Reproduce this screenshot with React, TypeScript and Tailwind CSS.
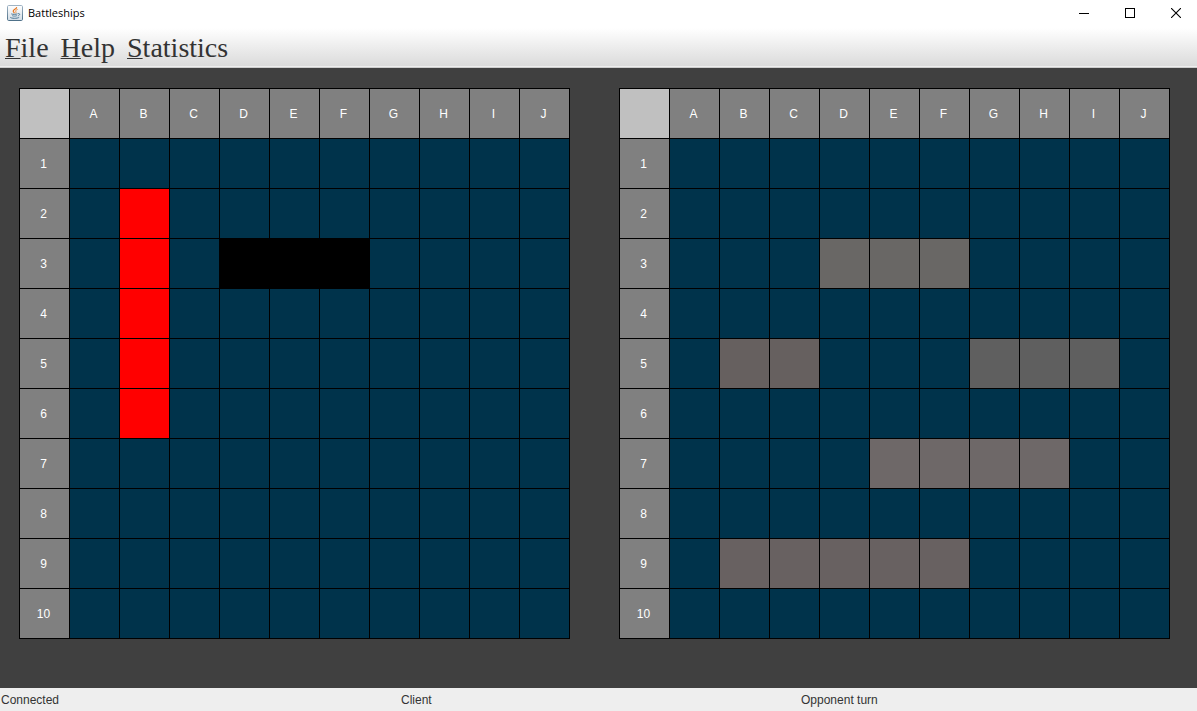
import React from "react";

const COLUMNS = ["A", "B", "C", "D", "E", "F", "G", "H", "I", "J"];
const ROWS = [1, 2, 3, 4, 5, 6, 7, 8, 9, 10];

type Cells = Record<string, string>;

const WATER = "bg-[#00334b]";

const opponentCells: Cells = {
  B2: "bg-[#ff0000]",
  B3: "bg-[#ff0000]",
  B4: "bg-[#ff0000]",
  B5: "bg-[#ff0000]",
  B6: "bg-[#ff0000]",
  D3: "bg-black",
  E3: "bg-black",
  F3: "bg-black",
};

const ownCells: Cells = {
  D3: "bg-[#696765]",
  E3: "bg-[#696765]",
  F3: "bg-[#696765]",
  B5: "bg-[#66605f]",
  C5: "bg-[#66605f]",
  G5: "bg-[#5f5f5f]",
  H5: "bg-[#5f5f5f]",
  I5: "bg-[#5f5f5f]",
  E7: "bg-[#6e6868]",
  F7: "bg-[#6e6868]",
  G7: "bg-[#6e6868]",
  H7: "bg-[#6e6868]",
  B9: "bg-[#686161]",
  C9: "bg-[#686161]",
  D9: "bg-[#686161]",
  E9: "bg-[#686161]",
  F9: "bg-[#686161]",
};

const CELL = "h-[50px] w-[50px] border-r border-b border-black";
const HEADER = `${CELL} bg-[#808080] p-0 pr-0.5 text-center align-middle text-xs font-normal text-white`;

function Board({ label, cells }: { label: string; cells: Cells }) {
  return (
    <table
      aria-label={label}
      className="shrink-0 table-fixed border-separate border-spacing-0 border-t border-l border-black"
    >
      <thead>
        <tr>
          <td className={`${CELL} bg-[#c0c0c0] p-0`} />
          {COLUMNS.map((column) => (
            <th key={column} scope="col" className={HEADER}>
              {column}
            </th>
          ))}
        </tr>
      </thead>
      <tbody>
        {ROWS.map((row) => (
          <tr key={row}>
            <th scope="row" className={HEADER}>
              {row}
            </th>
            {COLUMNS.map((column) => (
              <td key={column} className={`${CELL} p-0 ${cells[column + row] ?? WATER}`} />
            ))}
          </tr>
        ))}
      </tbody>
    </table>
  );
}

function JavaIcon() {
  return (
    <svg width="16" height="16" viewBox="0 0 16 16" fill="none" aria-hidden="true">
      <defs>
        <linearGradient id="tile" x1="0" y1="0" x2="0" y2="1">
          <stop offset="0" stopColor="#ffffff" />
          <stop offset="1" stopColor="#d3dde6" />
        </linearGradient>
        <linearGradient id="rim" x1="0" y1="0" x2="0" y2="1">
          <stop offset="0" stopColor="#9fb3c4" />
          <stop offset="1" stopColor="#4f7189" />
        </linearGradient>
      </defs>
      <rect x="0.5" y="0.5" width="15" height="15" rx="1.2" fill="url(#tile)" stroke="url(#rim)" />
      <path d="M9.6 2.2C10 4 6 4.600 6.200 6.200C6.300 7 7.200 7.400 7.300 8.200" stroke="#e8731a" strokeWidth="1.2" />
      <path d="M10.600 4.400C8.600 5.200 8.200 5.900 8.900 6.700C9.300 7.300 9 7.800 8.500 8.200" stroke="#ee8a3a" strokeWidth="1" />
      <path d="M4.300 8.900C5.500 9.500 9 9.500 10.500 8.800" stroke="#4b7693" strokeWidth="1" />
      <path d="M11 8.700C13.400 8 13.200 10.400 10.800 10.900" stroke="#4b7693" strokeWidth="0.9" />
      <path d="M5.200 10.700C6.500 11.300 8.600 11.200 9.900 10.700" stroke="#4b7693" strokeWidth="0.9" />
      <path d="M3.200 12.200C4 13.600 10.500 13.700 12.200 12.300" stroke="#4b7693" strokeWidth="1" />
    </svg>
  );
}

const WINDOW_BUTTON = "flex h-[26px] w-[46px] items-center justify-center";

function TitleBar() {
  return (
    <header className="flex h-7 items-start justify-between bg-white">
      <div className="flex h-[26px] items-center gap-[5px] pl-[7px]">
        <JavaIcon />
        <h1 className="font-['Open_Sans',sans-serif] text-[11px] leading-4 text-black">Battleships</h1>
      </div>
      <div className="-mr-0.5 flex overflow-hidden">
        <button type="button" aria-label="Minimize" className={WINDOW_BUTTON}>
          <svg width="10" height="10" viewBox="0 0 10 10" shapeRendering="crispEdges">
            <path d="M0 5.500H10" stroke="#000" />
          </svg>
        </button>
        <button type="button" aria-label="Maximize" className={WINDOW_BUTTON}>
          <svg width="10" height="10" viewBox="0 0 10 10" shapeRendering="crispEdges">
            <path d="M0.500 0.500H9.500V9.500H0.500Z" fill="none" stroke="#000" />
          </svg>
        </button>
        <button type="button" aria-label="Close" className={WINDOW_BUTTON}>
          <svg width="10" height="10" viewBox="0 0 10 10">
            <path d="M0 0L10 10M10 0L0 10" stroke="#000" strokeWidth="1.1" />
          </svg>
        </button>
      </div>
    </header>
  );
}

function MenuBar() {
  return (
    <nav className="flex h-10 items-center gap-3 border-b border-[#cccccc] bg-linear-to-b from-white to-[#dadada] pl-[5px] font-['Liberation_Serif',serif] text-[28px] leading-8 text-[#333333] shadow-[inset_0_-1px_0_#eeeeee]">
      {["File", "Help", "Statistics"].map((name) => (
        <button key={name} type="button">
          <span className="underline decoration-1 underline-offset-1">{name[0]}</span>
          {name.slice(1)}
        </button>
      ))}
    </nav>
  );
}

export default function App() {
  return (
    <div className="flex min-h-screen flex-col overflow-x-hidden bg-[#404040] font-['Liberation_Sans',Arial,sans-serif]">
      <TitleBar />
      <MenuBar />
      <main className="flex flex-1 items-start gap-[49px] pt-5 pl-[19px]">
        <Board label="Opponent board" cells={opponentCells} />
        <Board label="Own board" cells={ownCells} />
      </main>
      <footer className="grid h-[23px] grid-cols-[400px_400px_1fr] items-center bg-[#eeeeee] pl-px text-xs text-[#333333]">
        <span>Connected</span>
        <span>Client</span>
        <span>Opponent turn</span>
      </footer>
    </div>
  );
}
